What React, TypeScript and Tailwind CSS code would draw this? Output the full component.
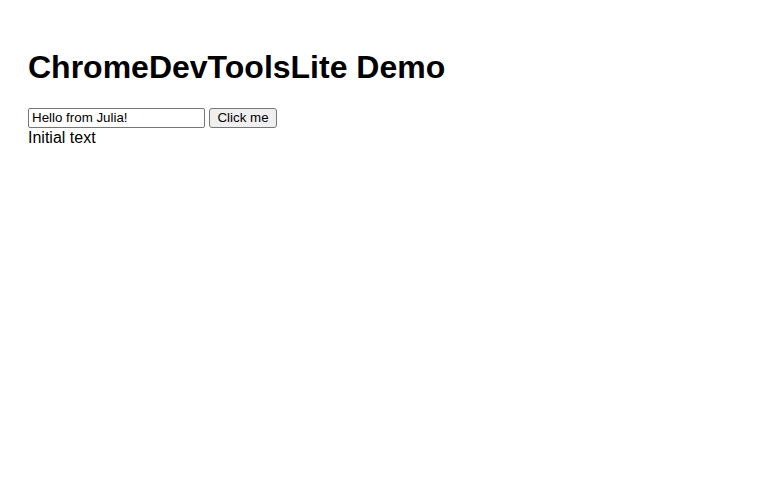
import { useState } from 'react';

export default function App() {
  const [text, setText] = useState('Hello from Julia!');
  const [output, setOutput] = useState('Initial text');

  return (
    <div className="min-h-screen bg-white p-[28px] text-black font-['Liberation_Sans',Arial,sans-serif]">
      <h1 className="my-[21.44px] text-[32px] font-bold leading-[normal]">
        ChromeDevToolsLite Demo
      </h1>

      <div className="flex h-[21px] items-start gap-[4px]">
        <input
          className="h-[20px] w-[177px] rounded-[2px] border border-[#767676] px-[3px] py-[1px] text-[13.33px] leading-[normal] outline-none"
          type="text"
          value={text}
          onChange={e => setText(e.target.value)}
        />
        <button
          className="h-[20px] w-[68px] rounded-[3px] border border-[#767676] bg-[#efefef] text-center text-[13.33px] leading-[normal]"
          onClick={() => setOutput(text)}
        >
          Click me
        </button>
      </div>

      <div className="text-[16px] leading-[normal]">{output}</div>
    </div>
  );
}
